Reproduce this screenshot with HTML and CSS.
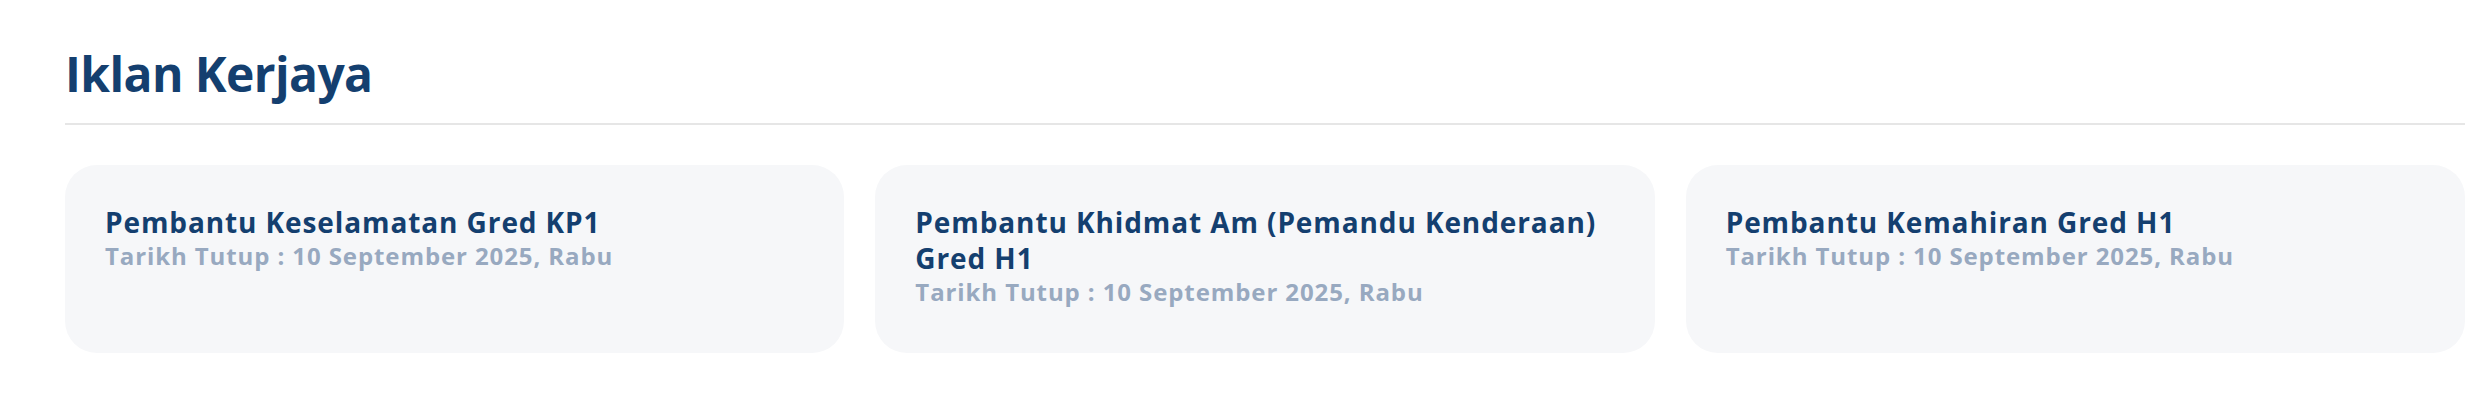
FILE: index.html
```html
<!DOCTYPE html>
<html lang="ms">
<head>
    <meta charset="UTF-8">
    <meta name="viewport" content="width=device-width, initial-scale=1.0">
    <title>Iklan Kerjaya</title>
    <link rel="stylesheet" href="styles.css">
</head>
<body>
    <section class="jobs">
        <h1 class="jobs-title">Iklan Kerjaya</h1>
        <div class="job-list">
            <a class="job-card" href="#">
                <h3 class="job-name">Pembantu Keselamatan Gred KP1</h3>
                <p class="job-date">Tarikh Tutup : 10 September 2025, Rabu</p>
            </a>
            <a class="job-card" href="#">
                <h3 class="job-name">Pembantu Khidmat Am (Pemandu Kenderaan) Gred H1</h3>
                <p class="job-date">Tarikh Tutup : 10 September 2025, Rabu</p>
            </a>
            <a class="job-card" href="#">
                <h3 class="job-name">Pembantu Kemahiran Gred H1</h3>
                <p class="job-date">Tarikh Tutup : 10 September 2025, Rabu</p>
            </a>
        </div>
    </section>
</body>
</html>
```

FILE: styles.css
```css
body {
    margin: 0;
    background: #fff;
    font-family: "Open Sans", Lato, sans-serif;
}
.jobs {
    padding: 45px 25px 40px 65px;
}
.jobs-title {
    margin: 0;
    padding-bottom: 20px;
    border-bottom: 2px solid #e6e6e6;
    font-size: 48px;
    line-height: 1.2;
    font-weight: 700;
    letter-spacing: -0.6px;
    color: #143f6f;
}
.job-list {
    display: grid;
    grid-template-columns: repeat(3, 1fr);
    gap: 31px;
    margin-top: 40px;
}
.job-card {
    display: block;
    min-height: 109px;
    padding: 39px 40px 40px;
    background: #f6f7f9;
    border-radius: 32px;
    text-decoration: none;
}
.job-name {
    margin: 0;
    font-size: 28px;
    line-height: 36px;
    font-weight: 700;
    letter-spacing: 0.9px;
    color: #143f6f;
}
.job-date {
    margin: 0;
    font-size: 24px;
    line-height: 32px;
    font-weight: 700;
    letter-spacing: 0.9px;
    color: #98a9c0;
}
```
